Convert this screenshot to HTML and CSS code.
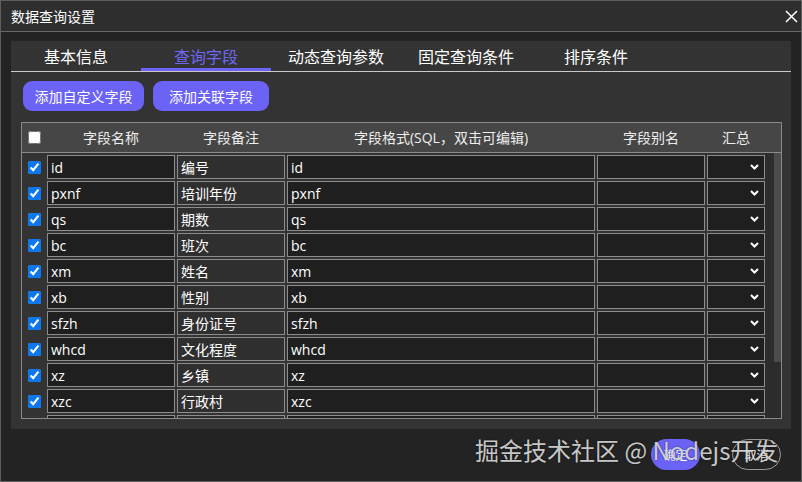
FILE: index.html
```html
<!DOCTYPE html>
<html lang="zh-CN">
<head>
    <meta charset="UTF-8">
    <meta name="viewport" content="width=device-width, initial-scale=1.0">
    <title>数据查询设置</title>
    <link rel="stylesheet" href="styles.css">
</head>
<body>
<div class="dialog">
    <div class="dlg_head">
        <span class="dlg_tit">数据查询设置</span>
        <span class="dlg_close">
            <svg width="13" height="13" viewBox="0 0 13 13"><path d="M1 1L12 12M12 1L1 12" stroke="#fff" stroke-width="1.5" fill="none"/></svg>
        </span>
    </div>
    <div class="dlg_body">
        <div class="panel">
            <ul class="tabs">
                <li>基本信息</li>
                <li class="on">查询字段</li>
                <li>动态查询参数</li>
                <li>固定查询条件</li>
                <li>排序条件</li>
            </ul>
            <div class="tools">
                <button type="button" class="btn btn_add">添加自定义字段</button>
                <button type="button" class="btn btn_rel">添加关联字段</button>
            </div>
            <div class="field_tbl">
                <div class="row thead">
                    <span class="ck"><input type="checkbox"></span>
                    <span>字段名称</span>
                    <span>字段备注</span>
                    <span>字段格式(SQL，双击可编辑)</span>
                    <span>字段别名</span>
                    <span>汇总</span>
                </div>
                <div class="tbody">
                    <div class="rows">
                        <div class="row"><span class="ck"><input type="checkbox" checked></span><input type="text" value="id"><input type="text" class="memo" value="编号"><input type="text" value="id"><input type="text" value=""><span class="sel"><svg width="9" height="6" viewBox="0 0 9 6"><path d="M1 1L4.5 4.5L8 1" stroke="#fff" stroke-width="2" fill="none"/></svg></span></div>
                        <div class="row"><span class="ck"><input type="checkbox" checked></span><input type="text" value="pxnf"><input type="text" class="memo" value="培训年份"><input type="text" value="pxnf"><input type="text" value=""><span class="sel"><svg width="9" height="6" viewBox="0 0 9 6"><path d="M1 1L4.5 4.5L8 1" stroke="#fff" stroke-width="2" fill="none"/></svg></span></div>
                        <div class="row"><span class="ck"><input type="checkbox" checked></span><input type="text" value="qs"><input type="text" class="memo" value="期数"><input type="text" value="qs"><input type="text" value=""><span class="sel"><svg width="9" height="6" viewBox="0 0 9 6"><path d="M1 1L4.5 4.5L8 1" stroke="#fff" stroke-width="2" fill="none"/></svg></span></div>
                        <div class="row"><span class="ck"><input type="checkbox" checked></span><input type="text" value="bc"><input type="text" class="memo" value="班次"><input type="text" value="bc"><input type="text" value=""><span class="sel"><svg width="9" height="6" viewBox="0 0 9 6"><path d="M1 1L4.5 4.5L8 1" stroke="#fff" stroke-width="2" fill="none"/></svg></span></div>
                        <div class="row"><span class="ck"><input type="checkbox" checked></span><input type="text" value="xm"><input type="text" class="memo" value="姓名"><input type="text" value="xm"><input type="text" value=""><span class="sel"><svg width="9" height="6" viewBox="0 0 9 6"><path d="M1 1L4.5 4.5L8 1" stroke="#fff" stroke-width="2" fill="none"/></svg></span></div>
                        <div class="row"><span class="ck"><input type="checkbox" checked></span><input type="text" value="xb"><input type="text" class="memo" value="性别"><input type="text" value="xb"><input type="text" value=""><span class="sel"><svg width="9" height="6" viewBox="0 0 9 6"><path d="M1 1L4.5 4.5L8 1" stroke="#fff" stroke-width="2" fill="none"/></svg></span></div>
                        <div class="row"><span class="ck"><input type="checkbox" checked></span><input type="text" value="sfzh"><input type="text" class="memo" value="身份证号"><input type="text" value="sfzh"><input type="text" value=""><span class="sel"><svg width="9" height="6" viewBox="0 0 9 6"><path d="M1 1L4.5 4.5L8 1" stroke="#fff" stroke-width="2" fill="none"/></svg></span></div>
                        <div class="row"><span class="ck"><input type="checkbox" checked></span><input type="text" value="whcd"><input type="text" class="memo" value="文化程度"><input type="text" value="whcd"><input type="text" value=""><span class="sel"><svg width="9" height="6" viewBox="0 0 9 6"><path d="M1 1L4.5 4.5L8 1" stroke="#fff" stroke-width="2" fill="none"/></svg></span></div>
                        <div class="row"><span class="ck"><input type="checkbox" checked></span><input type="text" value="xz"><input type="text" class="memo" value="乡镇"><input type="text" value="xz"><input type="text" value=""><span class="sel"><svg width="9" height="6" viewBox="0 0 9 6"><path d="M1 1L4.5 4.5L8 1" stroke="#fff" stroke-width="2" fill="none"/></svg></span></div>
                        <div class="row"><span class="ck"><input type="checkbox" checked></span><input type="text" value="xzc"><input type="text" class="memo" value="行政村"><input type="text" value="xzc"><input type="text" value=""><span class="sel"><svg width="9" height="6" viewBox="0 0 9 6"><path d="M1 1L4.5 4.5L8 1" stroke="#fff" stroke-width="2" fill="none"/></svg></span></div>
                        <div class="row"><span class="ck"><input type="checkbox" checked></span><input type="text" value="lxdh"><input type="text" class="memo" value="联系电话"><input type="text" value="lxdh"><input type="text" value=""><span class="sel"><svg width="9" height="6" viewBox="0 0 9 6"><path d="M1 1L4.5 4.5L8 1" stroke="#fff" stroke-width="2" fill="none"/></svg></span></div>
                        <div class="row"><span class="ck"><input type="checkbox" checked></span><input type="text" value="bz"><input type="text" class="memo" value="备注"><input type="text" value="bz"><input type="text" value=""><span class="sel"><svg width="9" height="6" viewBox="0 0 9 6"><path d="M1 1L4.5 4.5L8 1" stroke="#fff" stroke-width="2" fill="none"/></svg></span></div>
                        <div class="row"><span class="ck"><input type="checkbox" checked></span><input type="text" value="cjsj"><input type="text" class="memo" value="创建时间"><input type="text" value="cjsj"><input type="text" value=""><span class="sel"><svg width="9" height="6" viewBox="0 0 9 6"><path d="M1 1L4.5 4.5L8 1" stroke="#fff" stroke-width="2" fill="none"/></svg></span></div>
                    </div>
                    <div class="scroll_y"><div class="thumb"></div></div>
                </div>
            </div>
        </div>
        <div class="dlg_foot">
            <button type="button" class="pill pill_ok">确定</button>
            <button type="button" class="pill pill_cancel">取消</button>
        </div>
    </div>
    <div class="watermark">掘金技术社区 @ Nodejs开发</div>
</div>
</body>
</html>
```

FILE: styles.css
```css
* { box-sizing: border-box; margin: 0; padding: 0; }
body { margin: 0; background: #232323; color: #fff; font-family: "Open Sans", "Noto Sans CJK SC", sans-serif; }

.dialog { position: relative; width: 802px; height: 482px; border: 1px solid #5e5e5e; background: #232323; display: flex; flex-direction: column; overflow: hidden; }
.dlg_head { flex: none; height: 31px; display: flex; align-items: center; justify-content: space-between; padding: 0 3px 0 10px; background: #2e2e2e; border-bottom: 1px solid #686868; }
.dlg_tit { font-size: 14px; line-height: 20px; font-family: "Noto Sans CJK SC", sans-serif; }
.dlg_close { display: flex; width: 14px; height: 14px; align-items: center; justify-content: center; }

.dlg_body { flex: 1; padding: 9px 10px 0 10px; }
.panel { height: 388px; background: #333; padding: 0 9px 0 10px; }

.tabs { list-style: none; display: flex; height: 31px; margin: 0 -9px 0 -10px; border-bottom: 1px solid #c9c9c9; }
.tabs li { width: 130px; height: 30px; line-height: 30px; text-align: center; font-size: 16px; font-family: "Noto Sans CJK SC", sans-serif; color: #fff; }
.tabs li.on { color: #6f67f3; box-shadow: inset 0 -3px 0 #6b63f6; }

.tools { display: flex; gap: 9px; margin: 9px 0 0 2px; }
.btn { height: 30px; border: 0; border-radius: 9px; background: #6b63f6; color: #fff; font-size: 14px; font-family: "Noto Sans CJK SC", sans-serif; }
.btn_add { width: 121px; }
.btn_rel { width: 116px; }

.field_tbl { margin-top: 11px; border: 1px solid #8a8a8a; }
.row { display: grid; grid-template-columns: 23px 128px 108px 308px 108px 58px; column-gap: 2px; height: 24px; margin-bottom: 2px; }
.thead { height: 30px; margin: 0; background: #464646; border-bottom: 1px solid #8a8a8a; align-items: center; }
.thead span { text-align: center; font-size: 14px; line-height: 20px; color: #eee; }
.ck { display: flex; align-items: center; justify-content: center; padding-left: 1px; }
.ck input { margin: 0; width: 13px; height: 13px; accent-color: #0c78ee; }

.tbody { display: flex; height: 265px; }
.rows { flex: 1; overflow: hidden; padding-top: 2px; }
.rows input[type=text] { width: 100%; min-width: 0; height: 24px; border: 1px solid #8c8c8c; background: #1f1f1f; color: #fff; font-size: 14px; font-family: "Open Sans", "Noto Sans CJK SC", sans-serif; padding: 0 3px; outline: none; }
.rows input.memo { background: #2f2f2f; }
.sel { display: flex; align-items: center; justify-content: flex-end; padding-right: 5px; border: 1px solid #8c8c8c; background: #1f1f1f; }

.scroll_y { width: 16px; background: #2c2c2c; }
.thumb { width: 7px; height: 209px; margin-left: 9px; background: #4c4c4c; }

.dlg_foot { display: flex; justify-content: flex-end; gap: 32px; padding: 10px 10px 0 0; }
.pill { width: 49px; height: 31px; border-radius: 16px; font-size: 12px; color: #fff; font-family: "Noto Sans CJK SC", sans-serif; }
.pill_ok { border: 0; background: #6b63f6; }
.pill_cancel { border: 1px solid #9a9a9a; background: transparent; }

.watermark { position: absolute; left: 474px; top: 435px; font-size: 24px; line-height: 28px; white-space: nowrap; font-family: "Noto Sans CJK SC", sans-serif; color: rgba(232, 232, 232, 0.86); text-shadow: 0 0 2px rgba(0, 0, 0, 0.6); }
```
